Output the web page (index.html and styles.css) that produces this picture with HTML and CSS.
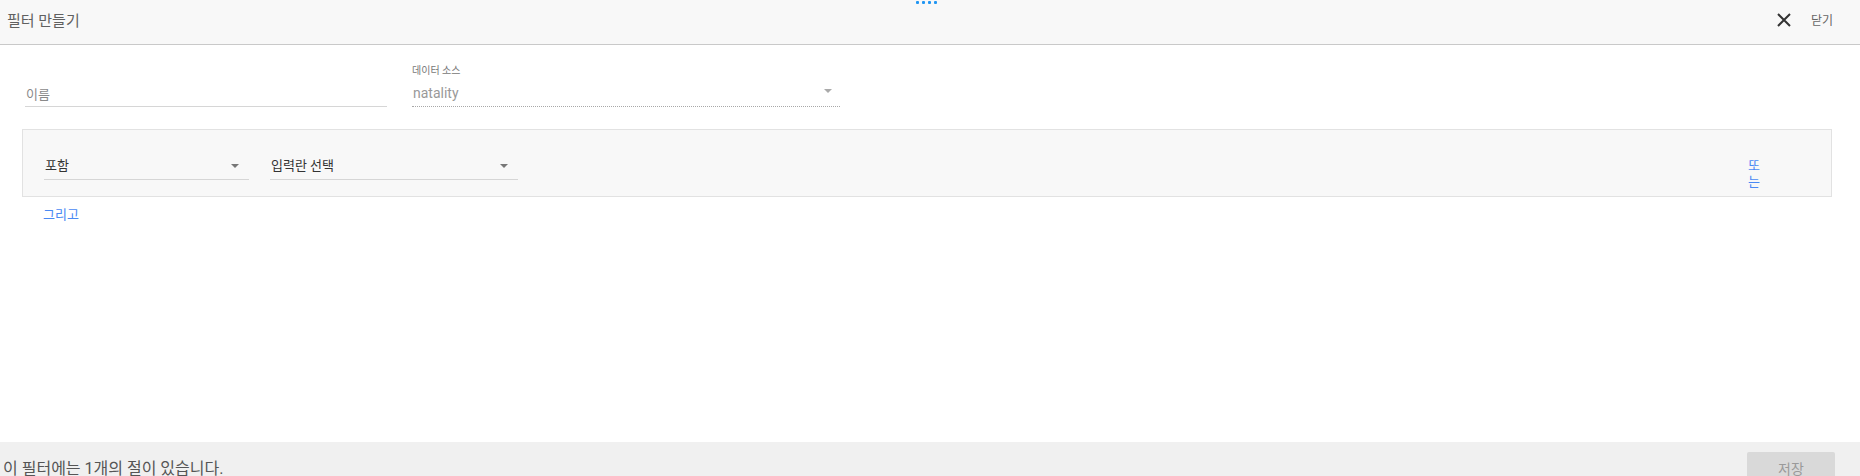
FILE: index.html
```html
<!DOCTYPE html>
<html lang="ko">
<head>
<meta charset="utf-8">
<link rel="stylesheet" href="styles.css">
</head>
<body>
<div class="page">
  <header class="topbar">
    <div class="title">필터 만들기</div>
    <div class="drag-dots"><span></span><span></span><span></span><span></span></div>
    <div class="close">
      <svg class="close-icon" width="14" height="14" viewBox="0 0 14 14"><path d="M1 1 L13 13 M13 1 L1 13" stroke="#333" stroke-width="2" fill="none"/></svg>
      <span class="close-label">닫기</span>
    </div>
  </header>
  <main class="content">
    <div class="fields">
      <div class="field name-field">
        <div class="value placeholder">이름</div>
      </div>
      <div class="field source-field">
        <div class="label">데이터 소스</div>
        <div class="value disabled">natality<span class="caret light"></span></div>
      </div>
    </div>
    <div class="clause-box">
      <div class="select sel-include"><span>포함</span><span class="caret"></span></div>
      <div class="select sel-field"><span>입력란 선택</span><span class="caret"></span></div>
      <div class="or-link">또는</div>
    </div>
    <div class="and-link">그리고</div>
  </main>
  <footer class="footer">
    <div class="summary">이 필터에는 1개의 절이 있습니다.</div>
    <button class="save">저장</button>
  </footer>
</div>
</body>
</html>
```
FILE: styles.css
```css
* { box-sizing: border-box; }
html, body { margin: 0; padding: 0; }
body {
  font-family: Roboto, "Noto Sans CJK KR", sans-serif;
  background: #fff;
  color: #333;
  width: 1860px;
  height: 476px;
  overflow: hidden;
}
.page {
  display: flex;
  flex-direction: column;
  height: 502px;
}
.topbar {
  position: relative;
  height: 45px;
  background: #f8f8f8;
  border-bottom: 1px solid #c9c9c9;
  display: flex;
  align-items: center;
  padding: 0 27px 6px 7px;
  flex-shrink: 0;
}
.title {
  font-size: 15px;
  color: #606060;
}
.drag-dots {
  position: absolute;
  top: 1px;
  left: 916px;
  display: flex;
  gap: 3px;
}
.drag-dots span {
  width: 3px;
  height: 3px;
  background: #2196f3;
  border-radius: 1px;
}
.close {
  margin-left: auto;
  display: flex;
  align-items: center;
  gap: 20px;
}
.close-icon { display: block; margin-top: 2px; }
.close-label {
  font-size: 12px;
  color: #666;
}
.content {
  flex: 1;
  padding: 20px 28px 0 22px;
}
.fields {
  display: flex;
  align-items: flex-end;
  gap: 25px;
  padding-left: 3px;
}
.field .value {
  position: relative;
  font-size: 14px;
  line-height: 20px;
  padding-bottom: 3px;
}
.name-field { width: 362px; }
.name-field .value {
  border-bottom: 1px solid #d6d6d6;
  color: #8a8a8a;
  font-size: 13px;
  padding-left: 1px;
  padding-bottom: 1px;
}
.source-field { width: 428px; }
.source-field .label {
  font-size: 10px;
  line-height: 12px;
  color: #777;
  margin-bottom: 6px;
}
.source-field .value {
  color: #999;
  border-bottom: 1px dotted #a8a8a8;
  padding-left: 1px;
}
.caret {
  position: absolute;
  right: 10px;
  top: 8px;
  width: 0;
  height: 0;
  border-left: 4px solid transparent;
  border-right: 4px solid transparent;
  border-top: 4px solid #777;
}
.caret.light {
  right: 8px;
  top: 6px;
  border-top-color: #aaa;
}
.clause-box {
  margin-top: 22px;
  height: 68px;
  background: #f8f8f8;
  border: 1px solid #e2e2e2;
  display: flex;
  align-items: flex-start;
  padding: 26px 0 0 21px;
  gap: 21px;
}
.select {
  position: relative;
  font-size: 13px;
  line-height: 20px;
  color: #333;
  padding: 0 0 3px 1px;
  border-bottom: 1px solid #d6d6d6;
}
.sel-include { width: 205px; }
.sel-field { width: 248px; }
.or-link {
  margin-left: auto;
  margin-right: 70px;
  width: 14px;
  font-size: 13px;
  line-height: 16px;
  color: #4a8af4;
  margin-top: 2px;
  text-align: center;
}
.and-link {
  margin-top: 9px;
  padding-left: 21px;
  font-size: 13px;
  line-height: 18px;
  color: #4a8af4;
}
.footer {
  height: 60px;
  flex-shrink: 0;
  background: #f0f0f0;
  display: flex;
  align-items: flex-start;
  padding: 10px 25px 0 3px;
}
.summary {
  font-size: 16px;
  line-height: 20px;
  color: #555;
  margin-top: 7px;
}
.save {
  margin-left: auto;
  width: 88px;
  height: 34px;
  border: none;
  border-radius: 2px;
  background: #d9d9d9;
  color: #9a9a9a;
  font-family: Roboto, "Noto Sans CJK KR", sans-serif;
  font-size: 14px;
  line-height: 16px;
  padding: 0;
}
```
